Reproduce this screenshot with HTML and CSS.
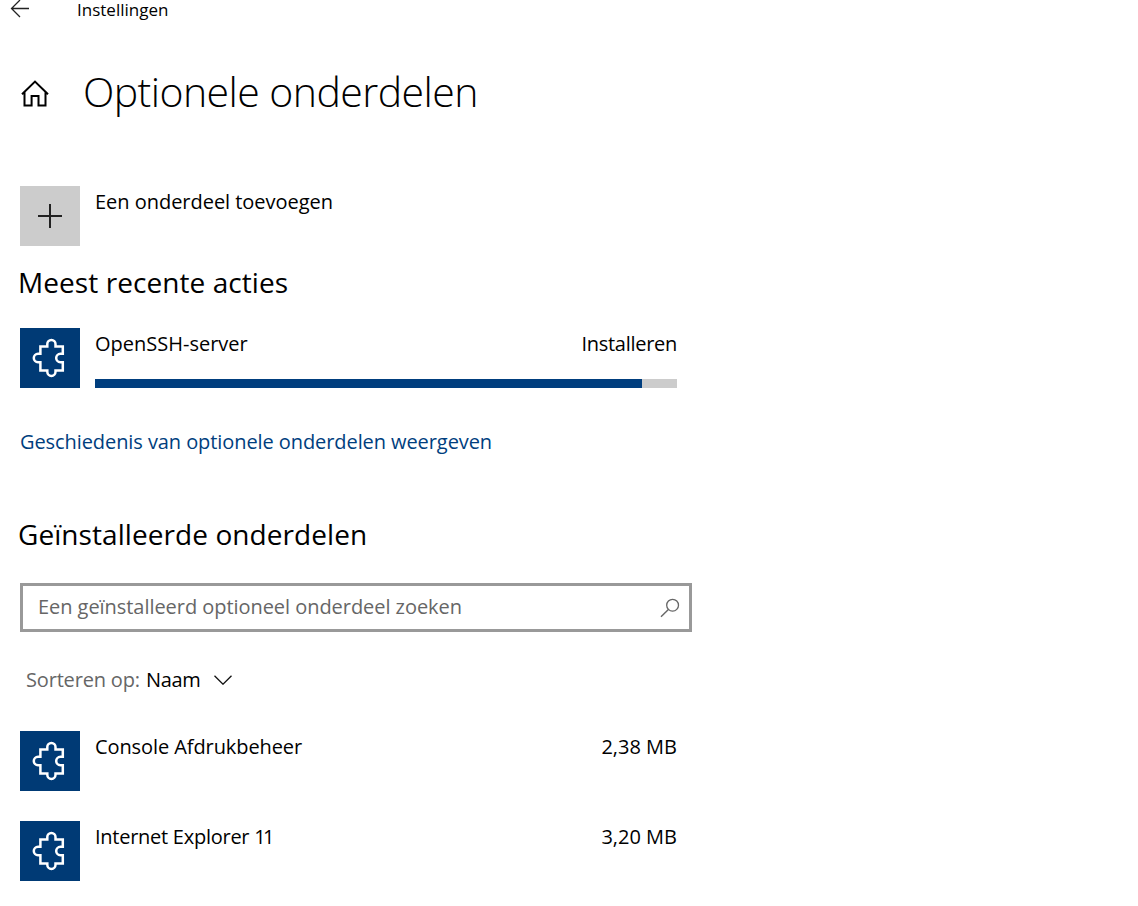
FILE: index.html
```html
<!DOCTYPE html>
<html lang="nl">
<head>
<meta charset="utf-8">
<title>Instellingen</title>
<link rel="stylesheet" href="styles.css">
</head>
<body>
<svg class="defs" width="0" height="0">
  <symbol id="puzzle" viewBox="0 0 60 60">
    <path d="M20.4 18.4H27.3V16.1A4.1 4.1 0 0 1 35.5 16.1V18.4H42.8V25.8H40.4A4.2 4.2 0 0 0 40.4 34.2H42.8V42.4H35.5V43.8A4.1 4.1 0 0 1 27.3 43.8V42.4H20.4V34.2H18A4.2 4.2 0 0 1 18 25.8H20.4Z" fill="none" stroke="#fff" stroke-width="2.5"/>
  </symbol>
</svg>
<header class="titlebar">
  <svg class="back" width="20" height="18" viewBox="0 0 20 18"><path d="M19 8.5H1.5M10 0L1.5 8.5L10 17" fill="none" stroke="#222" stroke-width="1.3"/></svg>
  <span class="app-name">Instellingen</span>
</header>
<main class="page">
  <div class="heading">
    <svg class="home" width="30" height="30" viewBox="0 0 30 30"><path d="M2 15.2L15 2.6L28 15.2M4.5 13V26.6H11.6V17.1H18.5V26.6H25.5V13" fill="none" stroke="#000" stroke-width="2"/></svg>
    <h1 class="title">Optionele onderdelen</h1>
  </div>
  <div class="row add">
    <div class="tile tile-gray"><svg width="60" height="60" viewBox="0 0 60 60"><path d="M18 30H42M30 18V42" stroke="#222" stroke-width="2"/></svg></div>
    <span class="label">Een onderdeel toevoegen</span>
  </div>
  <h2 class="section recent">Meest recente acties</h2>
  <div class="row action">
    <div class="tile"><svg width="60" height="60"><use href="#puzzle"/></svg></div>
    <div class="progress">
      <div class="line"><span>OpenSSH-server</span><span class="status">Installeren</span></div>
      <div class="bar"><div class="bar-fill"></div></div>
    </div>
  </div>
  <a class="link">Geschiedenis van optionele onderdelen weergeven</a>
  <h2 class="section installed">Geïnstalleerde onderdelen</h2>
  <div class="search">
    <span class="hint">Een geïnstalleerd optioneel onderdeel zoeken</span>
    <svg width="20" height="20" viewBox="0 0 20 20"><circle cx="12.6" cy="7.2" r="5.9" fill="none" stroke="#666" stroke-width="1.3"/><path d="M8.4 11.4L1 18.8" stroke="#666" stroke-width="1.4"/></svg>
  </div>
  <div class="sort">
    <span class="sort-label">Sorteren op:</span><span class="sort-value">Naam</span>
    <svg width="18" height="10" viewBox="0 0 18 10"><path d="M.5 .7L9 9.2L17.5 .7" fill="none" stroke="#111" stroke-width="1.3"/></svg>
  </div>
  <div class="row item">
    <div class="tile"><svg width="60" height="60"><use href="#puzzle"/></svg></div>
    <div class="line"><span class="console">Console Afdrukbeheer</span><span>2,38 MB</span></div>
  </div>
  <div class="row item">
    <div class="tile"><svg width="60" height="60"><use href="#puzzle"/></svg></div>
    <div class="line"><span class="explorer">Internet Explorer <span class="eleven">11</span></span><span>3,20 MB</span></div>
  </div>
</main>
</body>
</html>
```
FILE: styles.css
```css
body { margin: 0; height: 906px; overflow: hidden; background: #fff; color: #000; font: 20px/28px "Open Sans", "Noto Sans", sans-serif; }
span { white-space: nowrap; }
.defs { display: block; }
.titlebar { display: flex; height: 20px; padding-left: 10px; font-size: 17px; line-height: 19px; }
.back { width: 20px; margin-right: 47px; }
.page { padding-left: 20px; }
.heading { display: flex; align-items: center; height: 60px; margin-top: 43px; }
.home { margin-top: 2px; }
.title { margin: -4px 0 0 33px; font-size: 41px; font-weight: 330; line-height: 60px; letter-spacing: -0.56px; white-space: nowrap; }
.row { display: flex; gap: 15px; width: 657px; height: 60px; }
.tile { flex: none; width: 60px; height: 60px; background: #003a75; }
.tile svg { display: block; }
.tile-gray { background: #ccc; }
.add { margin-top: 63px; }
.label, .line { padding-top: 2px; }
.label { letter-spacing: -0.03px; }
.section { margin: 0 0 0 -2px; font-size: 28px; font-weight: 400; line-height: 40px; letter-spacing: 0.07px; white-space: nowrap; }
.recent { margin-top: 16px; }
.action { margin-top: 26px; }
.progress { flex: 1; }
.line { display: flex; flex: 1; justify-content: space-between; }
.status { letter-spacing: -0.28px; }
.bar { height: 9px; margin-top: 21px; background: #ccc; }
.bar-fill { width: 547px; height: 9px; background: #003e7e; }
.link { display: block; margin-top: 40px; color: #003e7e; letter-spacing: -0.08px; }
.installed { margin-top: 58px; }
.search { box-sizing: border-box; display: flex; align-items: center; justify-content: space-between; width: 672px; height: 49px; margin-top: 29px; padding: 0 9px 2px 15px; border: 3px solid #999; color: #666; }
.search svg { position: relative; top: 1px; }
.hint { letter-spacing: -0.05px; }
.sort { display: flex; align-items: center; height: 28px; margin: 34px 0 37px 6px; }
.sort-label { color: #666; margin-right: 6px; letter-spacing: -0.17px; }
.sort-value { margin-right: 13px; letter-spacing: -0.3px; }
.console { letter-spacing: -0.09px; }
.explorer { letter-spacing: -0.26px; }
.eleven { letter-spacing: -2.6px; }
.item { margin-bottom: 30px; }
```
